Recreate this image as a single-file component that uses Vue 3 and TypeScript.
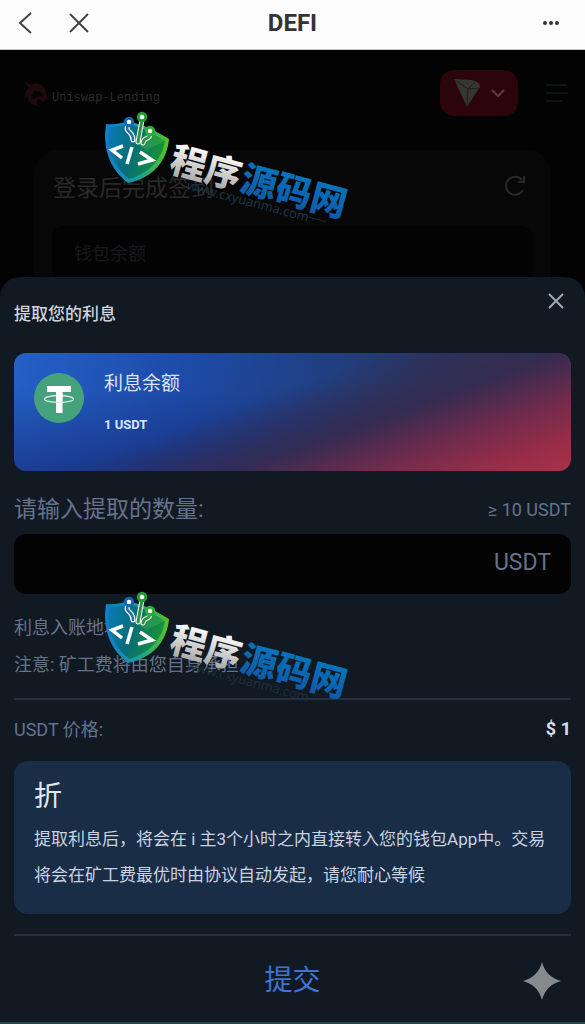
<script setup lang="ts">
import { ref } from 'vue'

const amount = ref('')
const network = ref('tron')
const marks = ['top', 'bottom']
</script>

<template>
  <div class="app">
    <header class="bar">
      <button class="icon-btn" type="button" aria-label="返回">
        <svg width="24" height="24" viewBox="0 0 24 24"><path d="M17 2 6 12 17 22" /></svg>
      </button>
      <button class="icon-btn close-page" type="button" aria-label="关闭">
        <svg width="24" height="24" viewBox="0 0 24 24"><path d="M4 3 22 21M22 3 4 21" /></svg>
      </button>
      <h1 class="bar-title">DEFI</h1>
      <button class="icon-btn more" type="button" aria-label="更多">
        <svg width="24" height="24" viewBox="0 0 24 24">
          <circle cx="6" cy="12" r="2" /><circle cx="12" cy="12" r="2" /><circle cx="18" cy="12" r="2" />
        </svg>
      </button>
    </header>

    <section class="behind">
      <div class="brand-row">
        <svg class="unicorn" width="28" height="28" viewBox="0 0 28 28">
          <path d="M2 2 9 6C16 2 24 7 24 14L26 20 21 23 17 20C13 23 14 25 17 27 9 26 5 22 6 17L2 20C3 15 4 11 7 9L2 2ZM12 12 9 17 12 20 16 17 21 18 19 13 12 12Z" />
        </svg>
        <span class="brand">Uniswap-Lending</span>
        <button class="network" type="button" :aria-label="network">
          <svg width="30" height="30" viewBox="0 0 30 30">
            <path d="M2 1 20 2Q28 4 28 9L15 29Z" fill="#363631" />
            <path d="M3 2 16 11 15 28M16 11 23 4M16 11 27 10" fill="none" stroke="#29191c" />
          </svg>
          <svg width="16" height="12" viewBox="0 0 16 12">
            <path d="M2 3 8 9 14 3" fill="none" stroke="#633943" stroke-width="2" />
          </svg>
        </button>
        <button class="menu" type="button" aria-label="菜单">
          <svg width="24" height="20" viewBox="0 0 24 20">
            <path d="M1 2H22M1 10H23M1 18H18" fill="none" stroke="#11131a" stroke-width="2" />
          </svg>
        </button>
      </div>
      <div class="panel">
        <div class="panel-head">
          <span>登录后完成签到</span>
          <button class="refresh" type="button" aria-label="刷新">
            <svg width="24" height="24" viewBox="0 0 24 24">
              <path d="M19 6A9 9 0 1 0 20 16M21 2V8H15" fill="none" stroke="#292929" stroke-width="2" />
            </svg>
          </button>
        </div>
        <div class="wallet">钱包余额</div>
      </div>
    </section>

    <main class="sheet">
      <div class="sheet-head">
        <h2>提取您的利息</h2>
        <button class="dismiss" type="button" aria-label="关闭弹窗">
          <svg width="18" height="18" viewBox="0 0 18 18"><path d="M2 2 16 16M16 2 2 16" /></svg>
        </button>
      </div>

      <div class="card">
        <svg width="50" height="50" viewBox="0 0 50 50">
          <circle cx="25" cy="25" r="25" fill="#45a27c" />
          <path d="M13 13H37V19H28.500V40H22V19H13Z" fill="#fff" />
          <ellipse cx="25" cy="26" rx="14.500" ry="3.500" fill="none" stroke="#dcebe5" stroke-width="1.300" />
          <path d="M22 20H28.500V28H22Z" fill="#fff" />
        </svg>
        <div class="card-text">
          <span class="card-label">利息余额</span>
          <strong>1 USDT</strong>
        </div>
      </div>

      <div class="amount-head">
        <label for="amount">请输入提取的数量:</label>
        <span>≥ 10 USDT</span>
      </div>
      <div class="field">
        <input id="amount" v-model="amount" type="text" inputmode="decimal" />
        <span>USDT</span>
      </div>

      <div class="notes">
        <p>利息入账地址</p>
        <p>注意: 矿工费将由您自身承担</p>
      </div>
      <hr />
      <div class="price">
        <span>USDT 价格:</span>
        <strong>$ 1</strong>
      </div>

      <section class="info">
        <h3>折</h3>
        <p>提取利息后，将会在 i 主3个小时之内直接转入您的钱包App中。交易将会在矿工费最优时由协议自动发起，请您耐心等候</p>
      </section>
      <hr />
      <footer class="foot">
        <button class="submit" type="button">提交</button>
        <svg class="spark" width="38" height="38" viewBox="0 0 38 38">
          <path d="M19 0Q23 15 38 19 23 23 19 38 15 23 0 19 15 15 19 0Z" fill="#858a8e" />
        </svg>
      </footer>
    </main>

    <svg v-for="m in marks" :key="m" :class="['mark', m]" width="280" height="140" viewBox="0 0 280 140" aria-hidden="true">
      <defs>
        <linearGradient :id="m + '-rim'" x1="0" y1="0" x2="1" y2="0">
          <stop offset="0" stop-color="#137bd0" /><stop offset="0.450" stop-color="#1599a5" /><stop offset="1" stop-color="#58c322" />
        </linearGradient>
        <linearGradient :id="m + '-body'" x1="0" y1="0" x2="1" y2="0.250">
          <stop offset="0" stop-color="#087bb9" /><stop offset="0.500" stop-color="#076d78" /><stop offset="1" stop-color="#169239" />
        </linearGradient>
        <linearGradient :id="m + '-silver'" x1="0" y1="0" x2="0" y2="1">
          <stop offset="0.200" stop-color="#ffffff" /><stop offset="1" stop-color="#999999" />
        </linearGradient>
        <linearGradient :id="m + '-blue'" x1="0" y1="0" x2="0" y2="1">
          <stop offset="0.200" stop-color="#0875bd" /><stop offset="1" stop-color="#1054a4" />
        </linearGradient>
      </defs>
      <path d="M6 15C15 16 22 14 29 12L50 19 69 30C67 52 53 69 28 74 11 61 2 41 6 15Z" :fill="`url(#${m}-rim)`" />
      <path d="M9 18C17 18 23 16 29 15L49 22 65 32C62 50 50 64 29 70 14 58 6 42 9 18Z" :fill="`url(#${m}-body)`" />
      <path d="M50 22 65 32 46 41 36 34Z" fill="#54ba4b" opacity="0.350" />
      <g fill="none" stroke-linecap="round">
        <path d="M29 14C23 25 33 20 33 31M42 11 38 33M50 24C50 32 44 27 43 34" stroke="#fff" stroke-width="5" />
        <path d="M29 14C23 25 33 20 33 31" stroke="#1970b3" stroke-width="2.500" />
        <path d="M42 11 38 33M50 24C50 32 44 27 43 34" stroke="#269642" stroke-width="3" />
      </g>
      <circle cx="29" cy="13" r="3.800" fill="#fff" stroke="#1764ac" stroke-width="3" />
      <circle cx="42" cy="8" r="3.800" fill="#fff" stroke="#239b3b" stroke-width="3" />
      <circle cx="50" cy="22" r="3.800" fill="#fff" stroke="#31a938" stroke-width="3" />
      <path d="M23 37 12 41 22 49M32 38 27 55M40 43 52 51 38 55" fill="none" stroke="#fff" stroke-width="3.500" />
      <g transform="translate(68 62) rotate(15)">
        <text class="mark-name" x="0" y="0" :fill="`url(#${m}-silver)`">程序</text>
        <text class="mark-name" x="73" y="0" :fill="`url(#${m}-blue)`">源码网</text>
        <text class="mark-url" x="22" y="13">www.cxyuanma.com</text>
        <path class="mark-line" d="M148 8H166" />
      </g>
    </svg>
  </div>
</template>

<style>
body {
  margin: 0;
  background: #111922;
}
</style>

<style scoped>
.app {
  position: relative;
  display: flex;
  flex-direction: column;
  min-height: 100vh;
  box-sizing: border-box;
  overflow: hidden;
  border-bottom: 2px solid #21494b;
  background: #030303;
  font-family: Roboto, "Noto Sans CJK SC", sans-serif;
}
button {
  display: flex;
  align-items: center;
  justify-content: center;
  padding: 0;
  border: 0;
  background: none;
  font-family: inherit;
  cursor: pointer;
}
h1, h2, h3, p {
  margin: 0;
}
.bar {
  display: grid;
  grid-template-columns: 24px 24px 1fr 24px 24px;
  column-gap: 28px;
  align-items: center;
  height: 50px;
  box-sizing: border-box;
  padding: 0 22px 4px 14px;
  border-bottom: 1px solid #c8c8c8;
  background: #fdfdfd;
}
.icon-btn svg {
  fill: none;
  stroke: #444;
  stroke-width: 2;
}
.more {
  grid-column: 5;
}
.icon-btn.more svg {
  fill: #333;
  stroke: none;
}
.bar-title {
  padding-left: 8px;
  color: #333;
  font-size: 24px;
  line-height: 28px;
  font-weight: 700;
  text-align: center;
}
.behind {
  height: 227px;
  overflow: hidden;
}
.brand-row {
  display: flex;
  align-items: center;
  padding: 20px 16px 0 22px;
}
.unicorn {
  fill: #1e090f;
}
.brand {
  flex: 1;
  padding: 10px 0 0 2px;
  color: #2d2d2d;
  font-family: "Liberation Mono", monospace;
  font-size: 12px;
  line-height: 16px;
}
.network {
  gap: 8px;
  width: 78px;
  height: 46px;
  border-radius: 14px;
  background: #2b040c;
}
.menu {
  margin-left: 27px;
}
.panel {
  margin: 34px 34px 0;
  height: 160px;
  border-radius: 24px;
  background: #070707;
}
.panel-head {
  display: flex;
  align-items: center;
  justify-content: space-between;
  height: 72px;
  padding: 0 24px 0 19px;
  color: #292929;
  font-size: 23px;
}
.wallet {
  margin: 4px 18px 0;
  padding: 12px 22px;
  border-radius: 12px;
  background: #030303;
  color: #17181c;
  font-size: 18px;
  line-height: 32px;
}
.sheet {
  flex: 1;
  display: flex;
  flex-direction: column;
  padding: 0 14px;
  border-radius: 20px 20px 0 0;
  background: #111922;
  color: #66728c;
}
.sheet-head {
  display: flex;
  align-items: flex-start;
  justify-content: space-between;
  height: 76px;
}
h2 {
  margin-top: 25px;
  color: #cdd3df;
  font-size: 17px;
  line-height: 24px;
  font-weight: 500;
}
.dismiss {
  margin: 15px 6px 0 0;
}
.dismiss svg {
  fill: none;
  stroke: #9da9bb;
  stroke-width: 2;
}
.card {
  display: flex;
  align-items: flex-start;
  gap: 20px;
  height: 118px;
  box-sizing: border-box;
  padding: 20px;
  border-radius: 12px;
  background:
    linear-gradient(160deg, rgba(50, 42, 82, 0) 42%, rgba(54, 43, 80, 0.9) 62%, #702b4c 77%, #982d48 90%, #ab3049 100%),
    linear-gradient(180deg, rgba(16, 24, 90, 0) 30%, rgba(16, 24, 90, 0.450) 100%),
    linear-gradient(100deg, #2460c6 0%, #1d4ba8 30%, #203f80 55%, #28345e 75%, #332c4e 100%);
}
.card-text {
  display: flex;
  flex-direction: column;
  gap: 17px;
  color: #dce5f5;
}
.card-label {
  font-size: 19px;
  line-height: 24px;
}
.card-text {
  margin-top: -1px;
}
.card-text strong {
  font-size: 13px;
  line-height: 24px;
}
.amount-head {
  display: flex;
  align-items: center;
  justify-content: space-between;
  height: 63px;
  font-size: 18px;
}
.amount-head label {
  margin-top: 14px;
  font-size: 23px;
  line-height: 28px;
}
.amount-head span {
  margin-top: 14px;
}
.field {
  display: flex;
  align-items: center;
  height: 60px;
  box-sizing: border-box;
  padding: 0 20px 4px;
  border-radius: 12px;
  background: #030304;
  font-size: 23px;
}
.field input {
  flex: 1;
  min-width: 0;
  border: 0;
  outline: 0;
  background: transparent;
  color: #dce5f5;
  font: inherit;
}
.notes {
  padding: 15px 0;
  font-size: 18px;
  line-height: 37px;
}
hr {
  width: 100%;
  height: 2px;
  margin: 0;
  border: 0;
  background: #272e41;
}
.price {
  display: flex;
  align-items: center;
  justify-content: space-between;
  height: 61px;
  box-sizing: border-box;
  padding-bottom: 4px;
  font-size: 18px;
}
.price span {
  padding-bottom: 2px;
}
.price strong {
  color: #d8dde8;
}
.info {
  margin-bottom: 20px;
  padding: 16px 20px 21px;
  border-radius: 14px;
  background: #1a2d47;
  color: #c9d3e0;
}
h3 {
  color: #e2e7ee;
  font-size: 28px;
  line-height: 40px;
  font-weight: 400;
}
.info p {
  padding-top: 4px;
  font-size: 17px;
  line-height: 36px;
}
.foot {
  flex: 1;
  display: grid;
  grid-template-columns: 1fr auto 1fr;
  align-items: center;
  min-height: 76px;
  padding-top: 3px;
}
.submit {
  grid-column: 2;
  color: #3f73d5;
  font-size: 28px;
  line-height: 40px;
}
.spark {
  justify-self: end;
  margin-right: 10px;
}
.mark {
  position: absolute;
  left: 100px;
  overflow: visible;
  pointer-events: none;
}
.top {
  top: 109px;
}
.bottom {
  top: 589px;
}
.mark-name {
  font-family: "Noto Sans CJK SC", sans-serif;
  font-size: 36px;
  font-weight: 900;
}
.mark-url {
  fill: #1f3546;
  font-family: "Noto Sans", sans-serif;
  font-size: 13px;
}
.mark-line {
  stroke: #1b2b38;
}
.bottom .mark-url {
  fill: #1d2e3a;
}
.bottom .mark-line {
  stroke: none;
}
</style>
